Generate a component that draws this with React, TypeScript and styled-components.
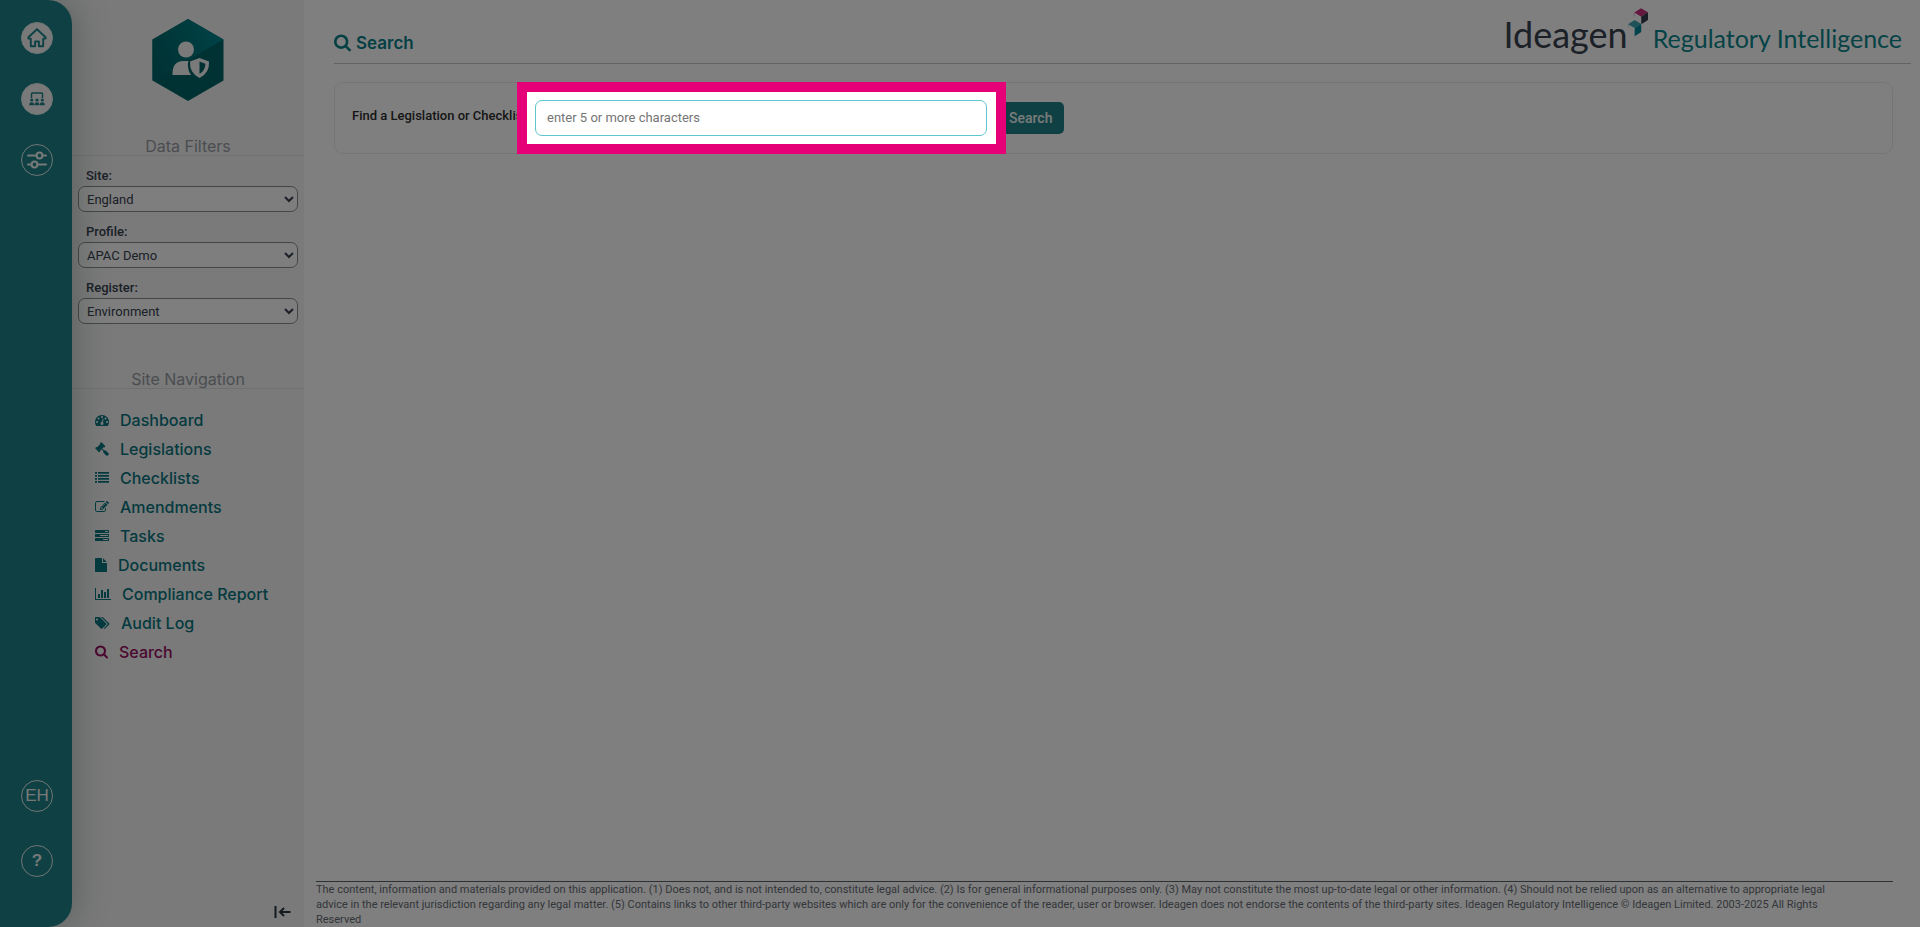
import React from "react";
import styled, { createGlobalStyle } from "styled-components";

const color = {
  teal: "#1e8389",
  tealText: "#09757f",
  tealHeading: "#0a8088",
  magenta: "#960e60",
  pink: "#e60078",
  ink: "#36414f",
  muted: "#969ba2",
  panel: "#f4f4f4",
  line: "#dfe2e3",
};

const uiFont = `Roboto, "Liberation Sans", sans-serif`;
const headingFont = `Inter, "Liberation Sans", sans-serif`;
const logoFont = `Lato, "Liberation Sans", sans-serif`;

const GlobalStyle = createGlobalStyle`
  *, *::before, *::after { box-sizing: border-box; }
  body {
    margin: 0;
    background: #fff;
    color: ${color.ink};
    font-family: ${uiFont};
    font-size: 13px;
    overflow-x: hidden;
  }
`;

const Page = styled.div`
  display: flex;
  min-height: 100vh;
`;

const RailHolder = styled.div`
  display: flex;
  flex: 0 0 72px;
  background: ${color.panel};
`;

const Rail = styled.nav`
  position: relative;
  z-index: 1;
  display: flex;
  flex: 1;
  flex-direction: column;
  align-items: center;
  justify-content: space-between;
  padding: 22px 0 50px 2px;
  background: ${color.teal};
  border-radius: 0 24px 24px 0;
  box-shadow: 6px 0 32px rgba(40, 60, 60, 0.26);
`;

const RailGroup = styled.div<{ $gap: number }>`
  display: flex;
  flex-direction: column;
  gap: ${(p) => p.$gap}px;
`;

const RailButton = styled.button<{ $filled?: boolean; $bold?: boolean }>`
  display: flex;
  align-items: center;
  justify-content: center;
  width: 32px;
  height: 32px;
  padding: 0;
  border: 1px solid #dfe9ea;
  border-radius: 50%;
  background: ${(p) => (p.$filled ? "#f3f3f5" : "transparent")};
  color: ${(p) => (p.$filled ? color.teal : "#eef3f3")};
  font-family: "Liberation Sans", sans-serif;
  font-size: 17px;
  font-weight: ${(p) => (p.$bold ? 700 : 400)};
`;

const Sidebar = styled.aside`
  display: flex;
  flex: 0 0 232px;
  flex-direction: column;
  background: ${color.panel};
`;

const Badge = styled.div`
  display: flex;
  justify-content: center;
  padding: 18px 0 35px;
`;

const SectionTitle = styled.h2`
  margin: 0;
  border-bottom: 1px solid ${color.line};
  color: ${color.muted};
  font-family: ${headingFont};
  font-size: 16px;
  font-weight: 400;
  line-height: 18px;
  text-align: center;
`;

const Filters = styled.form`
  display: flex;
  flex-direction: column;
  gap: 10px;
  padding: 10px 6px 46px;
`;

const Filter = styled.div`
  display: flex;
  flex-direction: column;
`;

const FilterLabel = styled.label`
  padding-left: 8px;
  font-weight: 500;
  line-height: 20px;
`;

const FilterSelect = styled.select`
  height: 26px;
  padding: 0 0 0 4px;
  border: 1px solid #868c92;
  border-radius: 7px;
  background-color: #fdfdfd;
  color: ${color.ink};
  font-family: ${uiFont};
  font-size: 13px;
`;

const NavList = styled.ul`
  display: flex;
  flex-direction: column;
  margin: 0;
  padding: 16px 0 0 23px;
  list-style: none;
`;

const NavLink = styled.a<{ $active?: boolean }>`
  display: flex;
  align-items: center;
  gap: 11px;
  height: 29px;
  color: ${(p) => (p.$active ? color.magenta : color.tealText)};
  font-family: ${headingFont};
  font-size: 16px;
  font-weight: 500;
  text-decoration: none;
`;

const CollapseButton = styled.button`
  align-self: flex-end;
  display: flex;
  margin: auto 13px 9px 0;
  padding: 0;
  border: 0;
  background: none;
  color: #2a3542;
`;

const Main = styled.main`
  display: flex;
  flex: 1;
  flex-direction: column;
  min-width: 0;
  padding-left: 12px;
`;

const Header = styled.header`
  display: flex;
  align-items: flex-start;
  justify-content: space-between;
  height: 64px;
  margin: 0 9px 0 18px;
  border-bottom: 1px solid #c6c7ca;
`;

const PageTitle = styled.h1`
  display: flex;
  align-items: center;
  gap: 5px;
  margin: 0;
  padding-top: 33px;
  color: ${color.tealHeading};
  font-family: ${headingFont};
  font-size: 17px;
  font-weight: 600;
  line-height: 20px;
`;

const Brand = styled.div`
  display: flex;
  align-items: flex-start;
  padding: 8px 9px 0 0;
  font-family: ${logoFont};
  white-space: nowrap;
`;

const BrandText = styled.div`
  display: flex;
  align-items: baseline;
  line-height: 52px;
`;

const BrandName = styled.span`
  color: #39424f;
  font-size: 36px;
`;

const BrandMark = styled.svg`
  align-self: flex-start;
  margin-right: 5px;
`;

const BrandProduct = styled.span`
  color: #0b868d;
  font-size: 25px;
`;

const SearchCard = styled.form`
  display: flex;
  align-items: center;
  margin: 18px 27px 0 18px;
  padding: 17px;
  border: 1px solid #eaebec;
  border-radius: 9px;
`;

const SearchLabel = styled.label`
  flex: 0 0 183px;
  align-self: flex-start;
  color: #2d2d2d;
  font-weight: 500;
  line-height: 32px;
  white-space: nowrap;
`;

const SearchField = styled.div`
  position: relative;
  flex: 0 1 452px;
`;

const SearchInput = styled.input`
  display: block;
  width: 100%;
  height: 36px;
  padding: 0 11px 2px;
  border: 1px solid #5cc5cd;
  border-radius: 7px;
  outline: 0;
  background: #fff;
  font-family: ${uiFont};
  font-size: 13px;

  &::placeholder {
    color: #757575;
    opacity: 1;
  }
`;

/* Tour highlight: a frame round the field, with the rest of the page dimmed. */
const Spotlight = styled.div`
  position: absolute;
  z-index: 10;
  inset: -18px -19px -18px -18px;
  border: 10px solid ${color.pink};
  box-shadow: 0 0 0 200vmax rgba(0, 0, 0, 0.5);
  pointer-events: none;
`;

const SearchButton = styled.button`
  height: 32px;
  margin-left: 10px;
  padding: 0 12px 1px;
  border: 0;
  border-radius: 5px;
  background: ${color.teal};
  color: #f2f6f6;
  font-family: ${uiFont};
  font-size: 14px;
  font-weight: 500;
`;

const Disclaimer = styled.footer`
  margin: auto 27px 0 0;
  border-top: 1px solid #5f6468;
  color: #666c74;
  font-size: 11px;
  line-height: 15px;
`;

type Glyph = { box: string; width: number; path: string };

const glyphs: Record<string, Glyph> = {
  dashboard: {
    box: "0 0 1792 1792",
    width: 14,
    path: "M384 1152q0-53-37.500-90.500t-90.500-37.500-90.500 37.500-37.500 90.500 37.500 90.500 90.500 37.500 90.500-37.500 37.500-90.500zm192-448q0-53-37.500-90.500t-90.500-37.500-90.500 37.500-37.500 90.500 37.500 90.500 90.500 37.500 90.500-37.500 37.500-90.500zm428 481l101-382q6-26-7.500-48.500t-38.500-29.500-48 6.500-30 39.500l-101 382q-60 5-107 43.500t-63 98.500q-20 77 20 146t117 89 146-20 89-117q16-60-6-117t-72-91zm660-33q0-53-37.500-90.500t-90.500-37.500-90.500 37.500-37.500 90.500 37.500 90.500 90.500 37.500 90.500-37.500 37.500-90.500zm-640-640q0-53-37.500-90.500t-90.500-37.500-90.500 37.500-37.500 90.500 37.500 90.500 90.500 37.500 90.500-37.500 37.500-90.500zm448 192q0-53-37.500-90.500t-90.500-37.500-90.500 37.500-37.500 90.500 37.500 90.500 90.500 37.500 90.500-37.500 37.500-90.500zm320 448q0 261-141 483-19 29-54 29h-1402q-35 0-54-29-141-221-141-483 0-182 71-348t191-286 286-191 348-71 348 71 286 191 191 286 71 348z",
  },
  gavel: {
    box: "0 0 1792 1792",
    width: 14,
    path: "M1771 1536q0 53-37 90l-107 108q-39 37-91 37-53 0-90-37l-363-364q-38-36-38-90 0-53 43-96l-256-256-126 126q-14 14-34 14t-34-14q2 2 12.500 12t12.500 13 10 11.500 10 13.500 6 13.500 5.500 16.500 1.500 18q0 38-28 68-3 3-16.500 18t-19 20.500-18.500 16.500-22 15.500-22 9-26 4.500q-40 0-68-28l-408-408q-28-28-28-68 0-13 4.500-26t9-22 15.500-22 16.500-18.500 20.500-19 18-16.500q30-28 68-28 10 0 18 1.500t16.500 5.500 13.500 6 13.500 10 11.500 10 13 12.500 12 12.500q-14-14-14-34t14-34l348-348q14-14 34-14t34 14q-2-2-12.500-12t-12.500-13-10-11.500-10-13.500-6-13.500-5.500-16.500-1.500-18q0-38 28-68 3-3 16.500-18t19-20.500 18.500-16.500 22-15.500 22-9 26-4.500q40 0 68 28l408 408q28 28 28 68 0 13-4.500 26t-9 22-15.500 22-16.500 18.500-20.500 19-18 16.500q-30 28-68 28-10 0-18-1.500t-16.500-5.500-13.500-6-13.500-10-11.500-10-13-12.500-12-12.500q14 14 14 34t-14 34l-126 126 256 256q43-43 96-43 52 0 91 37l363 363q37 39 37 91z",
  },
  list: {
    box: "0 0 1792 1792",
    width: 14,
    path: "M0 1280h256v224h-256zM0 896h256v224h-256zM0 512h256v224h-256zM0 128h256v224h-256zM384 1280h1408v224h-1408zM384 896h1408v224h-1408zM384 512h1408v224h-1408zM384 128h1408v224h-1408z",
  },
  edit: {
    box: "0 0 1792 1792",
    width: 14,
    path: "M888 1184l116-116-152-152-116 116v56h96v96h56zm440-720q-16-16-33 1l-350 350q-17 17-1 33t33-1l350-350q17-17 1-33zm80 594v190q0 119-84.500 203.500t-203.500 84.500h-832q-119 0-203.500-84.500t-84.500-203.500v-832q0-119 84.500-203.500t203.500-84.500h832q63 0 117 25 15 7 18 23 3 17-9 29l-49 49q-14 14-32 8-23-6-45-6h-832q-66 0-113 47t-47 113v832q0 66 47 113t113 47h832q66 0 113-47t47-113v-126q0-13 9-22l64-64q15-15 35-7t20 29zm-96-738l288 288-672 672h-288v-288zm444 132l-92 92-288-288 92-92q28-28 68-28t68 28l152 152q28 28 28 68t-28 68z",
  },
  tasks: {
    box: "0 0 1792 1792",
    width: 14,
    path: "M1024 1408h640v-128h-640v128zm-384-512h1024v-128h-1024v128zm640-512h384v-128h-384v128zm512 832v256q0 26-19 45t-45 19h-1664q-26 0-45-19t-19-45v-256q0-26 19-45t45-19h1664q26 0 45 19t19 45zm0-512v256q0 26-19 45t-45 19h-1664q-26 0-45-19t-19-45v-256q0-26 19-45t45-19h1664q26 0 45 19t19 45zm0-512v256q0 26-19 45t-45 19h-1664q-26 0-45-19t-19-45v-256q0-26 19-45t45-19h1664q26 0 45 19t19 45z",
  },
  file: {
    box: "128 0 1536 1792",
    width: 12,
    path: "M1152 512v-472q22 14 36 28l408 408q14 14 28 36h-472zm-128 32q0 40 28 68t68 28h544v1056q0 40-28 68t-68 28h-1344q-40 0-68-28t-28-68v-1600q0-40 28-68t68-28h800v544z",
  },
  chart: {
    box: "0 0 2048 1792",
    width: 16,
    path: "M640 896v512h-256v-512h256zm384-512v1024h-256v-1024h256zm1024 1152v128h-2048v-1536h128v1408h1920zm-640-896v768h-256v-768h256zm384-384v1152h-256v-1152h256z",
  },
  tags: {
    box: "0 0 1920 1792",
    width: 15,
    path: "M384 448q0-53-37.500-90.500t-90.500-37.500-90.500 37.500-37.500 90.500 37.500 90.500 90.500 37.500 90.500-37.500 37.500-90.500zm1067 576q0 53-37 90l-491 492q-39 37-91 37-53 0-90-37l-715-716q-38-37-64.500-101t-26.500-117v-416q0-52 38-90t90-38h416q53 0 117 26.500t102 64.500l715 714q37 39 37 91zm384 0q0 53-37 90l-491 492q-39 37-91 37-36 0-59-14t-53-45l470-470q37-37 37-90 0-52-37-91l-715-714q-38-38-102-64.500t-117-26.500h224q53 0 117 26.500t102 64.500l715 714q37 39 37 91z",
  },
  search: {
    box: "64 128 1664 1664",
    width: 13,
    path: "M1216 832q0-185-131.500-316.500t-316.500-131.500-316.500 131.500-131.500 316.500 131.500 316.500 316.500 131.500 316.500-131.500 131.500-316.500zm512 832q0 52-38 90t-90 38q-54 0-90-38l-343-342q-179 124-399 124-143 0-273.500-55.500t-225-150-150-225-55.500-273.500 55.500-273.500 150-225 225-150 273.500-55.500 273.500 55.500 225 150 150 225 55.500 273.500q0 220-124 399l343 343q37 37 37 90z",
  },
};

function Icon({ name, size = 14 }: { name: string; size?: number }) {
  const g = glyphs[name];
  const width = Math.round((g.width * size) / 14);
  return (
    <svg width={width} height={size} viewBox={g.box} fill="currentColor" aria-hidden="true">
      <path d={g.path} />
    </svg>
  );
}

const HomeIcon = () => (
  <svg width="20" height="20" viewBox="0 0 20 20" fill="none" stroke="currentColor" strokeWidth="1.9" strokeLinejoin="round" aria-hidden="true">
    <path d="M10 1.200 1.400 9.300v1.300h2.400v7.700h4.300v-4.800h3.800v4.800h4.300v-7.700h2.400V9.300z" />
  </svg>
);

const MeetingIcon = () => (
  <svg width="16" height="14" viewBox="0 0 16 14" fill="currentColor" aria-hidden="true">
    <path d="M2.500 6V1.800Q2.500 1 3.300 1h9.400q.8 0 .8.8V6" fill="none" stroke="currentColor" strokeWidth="1.500" />
    {[2.7, 8, 13.3].map((x) => (
      <g key={x}>
        <circle cx={x} cy="8" r="1.600" />
        <path d={`M${x - 2.4} 13.200v-1q0-2 2.400-2t2.400 2v1z`} />
      </g>
    ))}
  </svg>
);

const SlidersIcon = () => (
  <svg width="20" height="18" viewBox="0 0 20 18" fill="none" stroke="currentColor" strokeWidth="2" strokeLinecap="round" aria-hidden="true">
    <path d="M1 4.500h8.500M15.500 4.500H19M1 13.500h3.500M10.500 13.500H19" />
    <circle cx="12.500" cy="4.500" r="2.900" />
    <circle cx="7.500" cy="13.500" r="2.900" />
  </svg>
);

const HexBadge = () => (
  <svg width="72" height="84" viewBox="0 0 72 84" aria-hidden="true">
    <defs>
      <linearGradient id="hexTop" x1="0" y1="0.600" x2="1" y2="0.200">
        <stop offset="0" stopColor="#00666b" />
        <stop offset="0.450" stopColor="#007378" />
        <stop offset="1" stopColor="#008690" />
      </linearGradient>
    </defs>
    <path d="M36 1 71.500 21.500v41L36 83 .5 62.500v-41z" fill="#006468" />
    <path d="M36 1 71.500 21.500.5 62.500v-41z" fill="url(#hexTop)" />
    <g fill="#f4f4f4">
      <circle cx="34" cy="31.500" r="8" />
      <path d="M20.500 57q-.5-14 11-14h5q-.8 2-.6 5 .3 5.500 3.100 9z" />
      <path fillRule="evenodd" d="M47.500 40 57 43.500q.8 11.500-9.500 16.500-10.300-5-9.500-16.500zm0 3.600v12.500q5.800-3.600 5.900-10.300z" />
    </g>
  </svg>
);

const CubesMark = () => (
  <BrandMark width="20" height="30" viewBox="0 0 20 30" aria-hidden="true">
    <path d="M6.300 4.500 13 .3l7 4-6.800 4.400z" fill="#c9307f" />
    <path d="M13.200 8.700 20 4.300v7.600l-6.700 4.300z" fill="#333d4c" />
    <path d="M6.300 4.500v3.800" stroke="#d58fb0" strokeWidth=".6" />
    <path d="M0 16.300 6.700 12l6.500 4-6.500 4.100z" fill="#3fa3b0" />
    <path d="m6.700 20.100 6.500-4.100v8l-6.500 4.300z" fill="#008699" />
    <path d="M.3 16.300v3.600" stroke="#8fc6cd" strokeWidth=".6" />
  </BrandMark>
);

const CollapseIcon = () => (
  <svg width="17" height="12" viewBox="0 0 17 12" fill="none" stroke="currentColor" strokeWidth="2" aria-hidden="true">
    <path d="M1.500 0v12M16.500 6H6M10 2 6 6l4 4" />
  </svg>
);

const filters = [
  { id: "site", label: "Site:", value: "England" },
  { id: "profile", label: "Profile:", value: "APAC Demo" },
  { id: "register", label: "Register:", value: "Environment" },
];

const navItems = [
  { icon: "dashboard", label: "Dashboard" },
  { icon: "gavel", label: "Legislations" },
  { icon: "list", label: "Checklists" },
  { icon: "edit", label: "Amendments" },
  { icon: "tasks", label: "Tasks" },
  { icon: "file", label: "Documents" },
  { icon: "chart", label: "Compliance Report" },
  { icon: "tags", label: "Audit Log" },
  { icon: "search", label: "Search", active: true },
];

export default function App() {
  return (
    <>
      <GlobalStyle />
      <Page>
        <RailHolder>
          <Rail aria-label="Application">
            <RailGroup $gap={29}>
              <RailButton $filled aria-label="Home"><HomeIcon /></RailButton>
              <RailButton $filled aria-label="Organisation"><MeetingIcon /></RailButton>
              <RailButton aria-label="Settings"><SlidersIcon /></RailButton>
            </RailGroup>
            <RailGroup $gap={33}>
              <RailButton>EH</RailButton>
              <RailButton $bold>?</RailButton>
            </RailGroup>
          </Rail>
        </RailHolder>

        <Sidebar>
          <Badge><HexBadge /></Badge>
          <SectionTitle>Data Filters</SectionTitle>
          <Filters>
            {filters.map((f) => (
              <Filter key={f.id}>
                <FilterLabel htmlFor={f.id}>{f.label}</FilterLabel>
                <FilterSelect id={f.id} defaultValue={f.value}>
                  <option>{f.value}</option>
                </FilterSelect>
              </Filter>
            ))}
          </Filters>
          <SectionTitle>Site Navigation</SectionTitle>
          <NavList>
            {navItems.map((n) => (
              <li key={n.label}>
                <NavLink href="#" $active={n.active}>
                  <Icon name={n.icon} />
                  {n.label}
                </NavLink>
              </li>
            ))}
          </NavList>
          <CollapseButton aria-label="Collapse sidebar"><CollapseIcon /></CollapseButton>
        </Sidebar>

        <Main>
          <Header>
            <PageTitle>
              <Icon name="search" size={18} />
              Search
            </PageTitle>
            <Brand>
              <BrandText>
                <BrandName>Ideagen</BrandName>
                <CubesMark />
                <BrandProduct>Regulatory Intelligence</BrandProduct>
              </BrandText>
            </Brand>
          </Header>

          <SearchCard>
            <SearchLabel htmlFor="query">Find a Legislation or Checklist</SearchLabel>
            <SearchField>
              <SearchInput id="query" type="text" placeholder="enter 5 or more characters" />
              <Spotlight />
            </SearchField>
            <SearchButton type="button">Search</SearchButton>
          </SearchCard>

          <Disclaimer>
            The content, information and materials provided on this application. (1) Does not, and is not intended to, constitute legal advice. (2) Is for general informational purposes only. (3) May not constitute the most up-to-date legal or other information. (4) Should not be relied upon as an alternative to appropriate legal
            <br />
            advice in the relevant jurisdiction regarding any legal matter. (5) Contains links to other third-party websites which are only for the convenience of the reader, user or browser. Ideagen does not endorse the contents of the third-party sites. Ideagen Regulatory Intelligence © Ideagen Limited. 2003-2025 All Rights
            <br />
            Reserved
          </Disclaimer>
        </Main>
      </Page>
    </>
  );
}
